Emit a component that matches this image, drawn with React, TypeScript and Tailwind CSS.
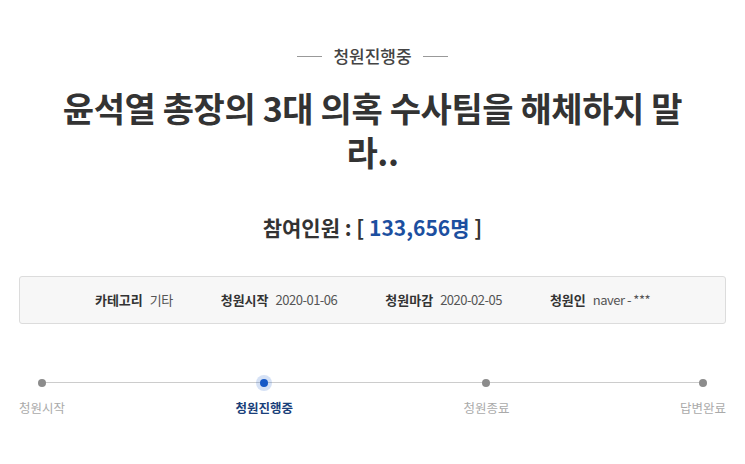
import React from 'react';

const steps = [
  { label: '청원시작', active: false },
  { label: '청원진행중', active: true },
  { label: '청원종료', active: false },
  { label: '답변완료', active: false },
];

const info = [
  { label: '카테고리', value: '기타' },
  { label: '청원시작', value: '2020-01-06' },
  { label: '청원마감', value: '2020-02-05' },
  { label: '청원인', value: 'naver - ***' },
];

export default function App() {
  return (
    <div
      className="w-[745px] h-[464px] bg-white text-[#333] overflow-hidden"
      style={{ fontFamily: '"Noto Sans CJK KR", "Noto Sans", sans-serif' }}
    >
      <div className="pt-[44px] flex items-center justify-center gap-[11px]">
        <span className="w-[25px] h-px bg-[#999]" />
        <span className="text-[17px] leading-[24px] font-medium text-[#444]">청원진행중</span>
        <span className="w-[25px] h-px bg-[#999]" />
      </div>

      <h1 className="mt-[18px] mx-auto w-[650px] text-center text-[34px] leading-[44px] font-bold tracking-[-0.4px] text-[#333]">
        윤석열 총장의 3대 의혹 수사팀을 해체하지 말라..
      </h1>

      <div className="mt-[38px] text-center text-[21px] leading-[30px] font-bold text-[#333]">
        참여인원 : [ <span className="text-[#1c4fa0]">133,656명</span> ]
      </div>

      <div className="mt-[34px] mx-[19px] h-[48px] rounded-[3px] border border-[#dcdcdc] bg-[#f7f7f7] flex items-center justify-center gap-[48px] text-[13px]">
        {info.map((item) => (
          <div key={item.label} className="flex items-center gap-[7px]">
            <span className="font-bold text-[#333]">{item.label}</span>
            <span className="text-[#555] tracking-[-0.5px]">{item.value}</span>
          </div>
        ))}
      </div>

      <div className="relative mt-[55px] mx-[19px] flex justify-between">
        <div className="absolute left-[23px] right-[22px] top-[3px] h-px bg-[#ccc]" />
        {steps.map((s) => (
          <div key={s.label} className="relative flex flex-col items-center">
            <div className="h-[8px] flex items-center justify-center">
              {s.active ? (
                <span className="w-[8px] h-[8px] rounded-full bg-[#1558c6] shadow-[0_0_0_4px_rgba(21,88,198,0.18)]" />
              ) : (
                <span className="w-[8px] h-[8px] rounded-full bg-[#8c8c8c]" />
              )}
            </div>
            <span
              className={
                s.active
                  ? 'mt-[12px] text-[12.5px] leading-[18px] font-bold text-[#1a3f7a]'
                  : 'mt-[12px] text-[12.5px] leading-[18px] text-[#aaa]'
              }
            >
              {s.label}
            </span>
          </div>
        ))}
      </div>
    </div>
  );
}
